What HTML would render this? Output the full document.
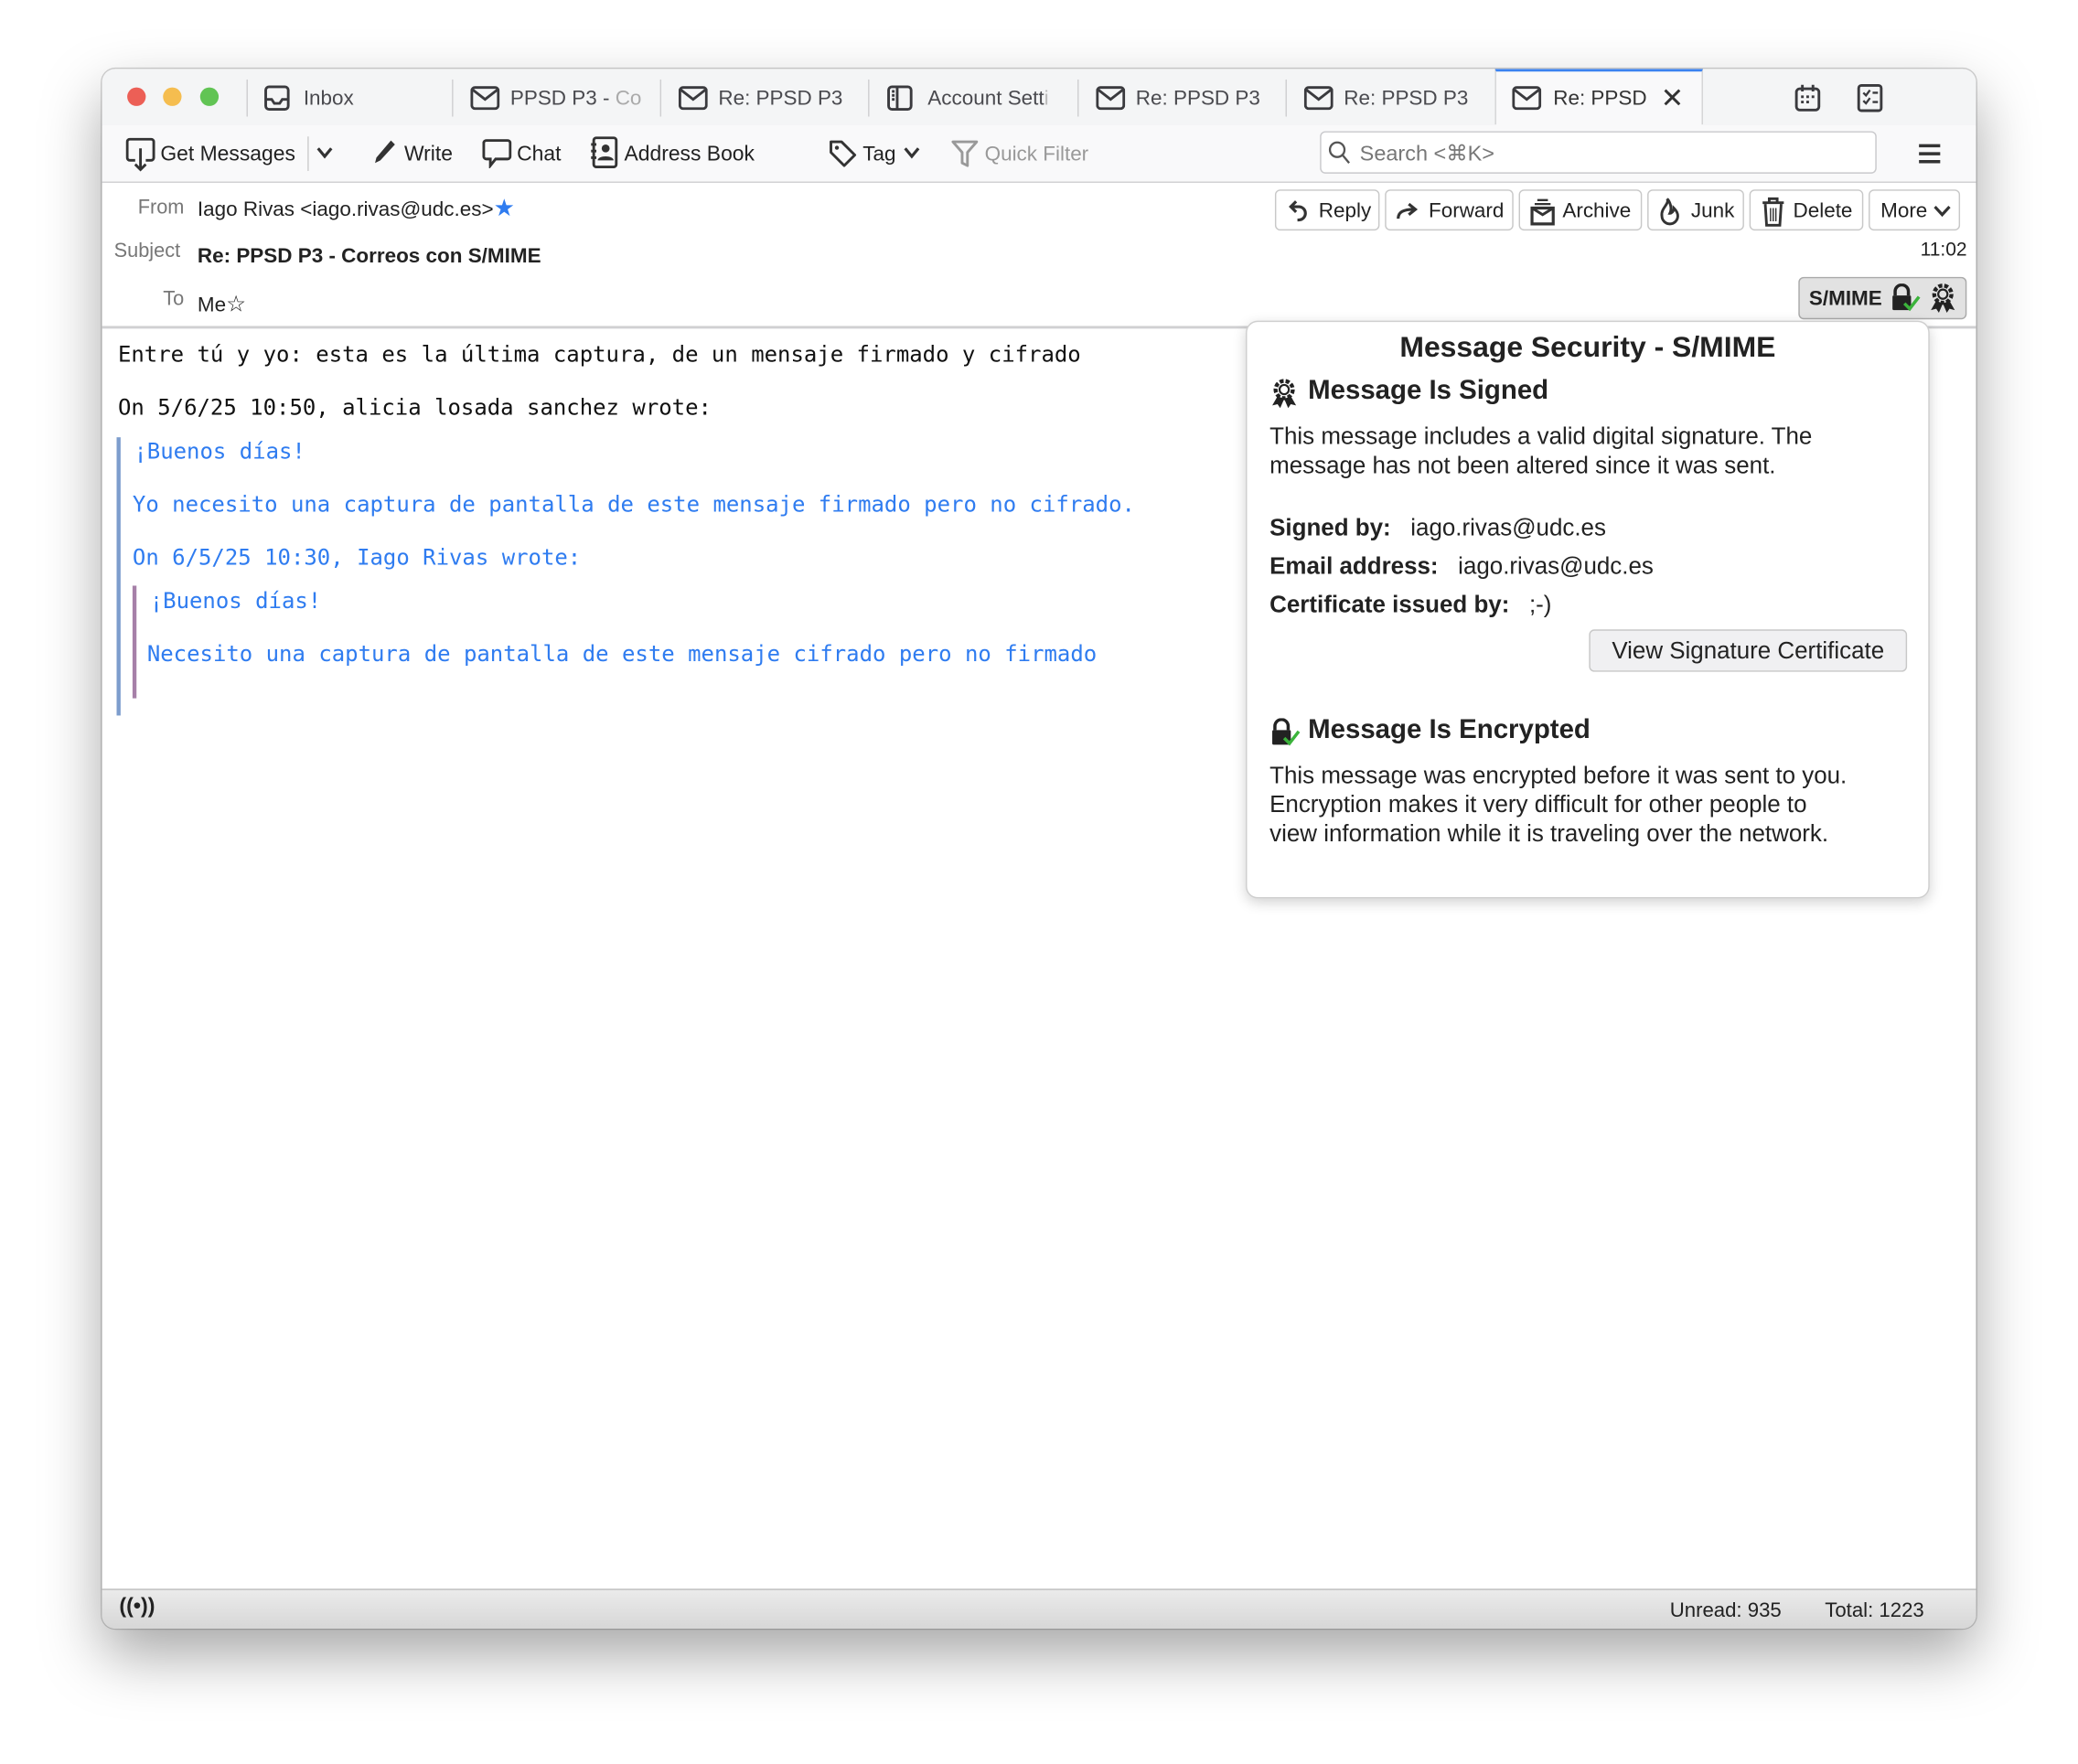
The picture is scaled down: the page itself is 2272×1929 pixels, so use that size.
<!DOCTYPE html>
<html><head><meta charset="utf-8"><style>
html,body{margin:0;padding:0;background:#fff;}
body{width:2272px;height:1928px;overflow:hidden;position:relative;}
#s{position:absolute;left:0;top:0;width:1568px;height:1331px;transform:scale(1.449);transform-origin:0 0;font-family:"Liberation Sans",sans-serif;color:#1f1f1f;}
.win{position:absolute;left:77px;top:52px;width:1414px;height:1177px;border-radius:10px;background:#fff;box-shadow:0 20px 45px rgba(0,0,0,.35),0 0 0 1px rgba(0,0,0,.18);overflow:hidden;}
.abs{position:absolute;}
.tabbar{left:0;top:0;width:1414px;height:42px;background:#f4f5f6;border-bottom:1px solid #d4d4d6;}
.dot{position:absolute;top:14px;width:14px;height:14px;border-radius:50%;}
.sep{position:absolute;top:8px;width:1px;height:28px;background:#cfcfd1;}
.tab{position:absolute;top:14px;font-size:15.5px;color:#4a4a4f;white-space:nowrap;overflow:hidden;}
.toolbar{left:0;top:42px;width:1414px;height:43px;background:#f9f9fa;border-bottom:2px solid #d0d0d2;}
.tb{position:absolute;top:14px;font-size:15.5px;color:#222;white-space:nowrap;}
.hdr{left:0;top:86px;width:1414px;height:108px;background:#fff;border-bottom:2px solid #d0d0d2;}
.lbl{position:absolute;font-size:15px;color:#777;}
.btn{position:absolute;top:5px;height:31px;border:1px solid #c8c8c8;border-radius:4px;background:#fff;font-size:15.5px;line-height:31px;color:#222;box-sizing:border-box;white-space:nowrap;}
.mono{font-family:"DejaVu Sans Mono","Liberation Mono",monospace;font-size:16.55px;white-space:pre;position:absolute;}
.blue{color:#2f7cf0;}
.pop{position:absolute;left:863px;top:190px;width:514px;height:434px;background:#fff;border:1px solid #cfcfcf;border-radius:9px;box-shadow:0 3px 10px rgba(0,0,0,.18);}
.pt{position:absolute;font-size:17.9px;color:#222;white-space:nowrap;}
.status{left:0;top:1147px;width:1414px;height:30px;background:linear-gradient(#ebebeb,#d6d6d6);border-top:1px solid #bdbdbd;}
svg{position:absolute;}
</style></head><body><div id="s">
<div class="win">
 <div class="abs tabbar">
  <div class="dot" style="left:19px;background:#ec5f56"></div>
  <div class="dot" style="left:46px;background:#f5bd4f"></div>
  <div class="dot" style="left:74px;background:#61c454"></div>
  <div class="sep" style="left:109px"></div><div class="sep" style="left:264px"></div><div class="sep" style="left:421px"></div><div class="sep" style="left:578px"></div><div class="sep" style="left:736px"></div><div class="sep" style="left:893px"></div>
  <svg style="left:122px;top:12px" width="20" height="20" viewBox="0 0 20 20"><rect x="1.5" y="1.5" width="17" height="17" rx="2.5" fill="none" stroke="#3a3a3e" stroke-width="2"/><path d="M2 11h4l2 3h4l2-3h4" fill="none" stroke="#3a3a3e" stroke-width="2"/></svg>
  <div class="tab" style="left:152px">Inbox</div>
  <svg style="left:278px;top:13px" width="22" height="18" viewBox="0 0 22 18"><rect x="1" y="1" width="20" height="16" rx="2.5" fill="none" stroke="#3a3a3e" stroke-width="2"/><path d="M2 3l9 7 9-7" fill="none" stroke="#3a3a3e" stroke-width="2"/></svg>
  <div class="tab" style="left:308px;width:100px;color:#4a4a4f">PPSD P3 - <span style="color:#aaa">Co</span></div>
  <svg style="left:435px;top:13px" width="22" height="18" viewBox="0 0 22 18"><rect x="1" y="1" width="20" height="16" rx="2.5" fill="none" stroke="#3a3a3e" stroke-width="2"/><path d="M2 3l9 7 9-7" fill="none" stroke="#3a3a3e" stroke-width="2"/></svg>
  <div class="tab" style="left:465px;width:96px">Re: PPSD P3 <span style="color:#bbb">-</span></div>
  <svg style="left:592px;top:12px" width="20" height="20" viewBox="0 0 20 20"><rect x="1.5" y="1.5" width="17" height="17" rx="2.5" fill="none" stroke="#3a3a3e" stroke-width="2"/><path d="M8 2v16M4 5h2M4 8h2M4 11h2" stroke="#3a3a3e" stroke-width="2"/></svg>
  <div class="tab" style="left:623px;width:98px">Account Sett<span style="color:#bbb">i</span></div>
  <svg style="left:750px;top:13px" width="22" height="18" viewBox="0 0 22 18"><rect x="1" y="1" width="20" height="16" rx="2.5" fill="none" stroke="#3a3a3e" stroke-width="2"/><path d="M2 3l9 7 9-7" fill="none" stroke="#3a3a3e" stroke-width="2"/></svg>
  <div class="tab" style="left:780px;width:96px">Re: PPSD P3 <span style="color:#bbb">-</span></div>
  <svg style="left:907px;top:13px" width="22" height="18" viewBox="0 0 22 18"><rect x="1" y="1" width="20" height="16" rx="2.5" fill="none" stroke="#3a3a3e" stroke-width="2"/><path d="M2 3l9 7 9-7" fill="none" stroke="#3a3a3e" stroke-width="2"/></svg>
  <div class="tab" style="left:937px;width:96px">Re: PPSD P3 <span style="color:#bbb">-</span></div>
  <div class="abs" style="left:1051px;top:0;width:157px;height:43px;background:#f9f9fa;border-left:1px solid #d4d4d6;border-right:1px solid #d4d4d6;border-top:2px solid #3b82f0;box-sizing:border-box"></div>
  <svg style="left:1064px;top:13px" width="22" height="18" viewBox="0 0 22 18"><rect x="1" y="1" width="20" height="16" rx="2.5" fill="none" stroke="#3a3a3e" stroke-width="2"/><path d="M2 3l9 7 9-7" fill="none" stroke="#3a3a3e" stroke-width="2"/></svg>
  <div class="tab" style="left:1095px;color:#333">Re: PPSD</div>
  <div class="tab" style="left:1176px;top:10px;font-size:21px;color:#333">✕</div>
  <svg style="left:1277px;top:11px" width="20" height="22" viewBox="0 0 20 22"><rect x="1.5" y="4" width="17" height="16" rx="2.5" fill="none" stroke="#3a3a3e" stroke-width="2"/><path d="M6 1v5M14 1v5M5 10h2M9 10h2M13 10h2M5 14h2M9 14h2" stroke="#3a3a3e" stroke-width="2"/></svg>
  <svg style="left:1324px;top:11px" width="20" height="22" viewBox="0 0 20 22"><rect x="1.5" y="1.5" width="17" height="19" rx="2" fill="none" stroke="#3a3a3e" stroke-width="2"/><path d="M5 7l2 2 3-4M12 7h4M5 13l2 2 3-4M12 14h4" fill="none" stroke="#3a3a3e" stroke-width="1.6"/></svg>
 </div>
 <div class="abs toolbar">
  <svg style="left:18px;top:10px" width="22" height="26" viewBox="0 0 22 26"><path d="M7 17H3a2 2 0 0 1-2-2V3a2 2 0 0 1 2-2h16a2 2 0 0 1 2 2v12a2 2 0 0 1-2 2h-4" fill="none" stroke="#333" stroke-width="2"/><path d="M11 8v16M7 20l4 4 4-4" fill="none" stroke="#333" stroke-width="2"/></svg>
  <div class="tb" style="left:44px;font-size:15.8px">Get Messages</div>
  <div class="abs" style="left:155px;top:9px;width:1px;height:26px;background:#ccc"></div>
  <svg style="left:162px;top:17px" width="12" height="9" viewBox="0 0 12 9"><path d="M1 1l5 6 5-6" fill="none" stroke="#333" stroke-width="2.2"/></svg>
  <svg style="left:203px;top:10px" width="20" height="22" viewBox="0 0 20 22"><path d="M15 2l3 3-11 12-4 2 1-4z" fill="#333"/></svg>
  <div class="tb" style="left:228px;font-size:15.8px">Write</div>
  <svg style="left:287px;top:11px" width="22" height="22" viewBox="0 0 22 22"><path d="M3 1h16a2 2 0 0 1 2 2v10a2 2 0 0 1-2 2H10l-4 5v-5H3a2 2 0 0 1-2-2V3a2 2 0 0 1 2-2z" fill="none" stroke="#333" stroke-width="2"/></svg>
  <div class="tb" style="left:313px;font-size:15.8px">Chat</div>
  <svg style="left:368px;top:9px" width="22" height="24" viewBox="0 0 22 24"><rect x="3" y="1" width="17" height="22" rx="2" fill="none" stroke="#333" stroke-width="2"/><circle cx="12" cy="9" r="3" fill="#333"/><path d="M6 18c0-4 12-4 12 0z" fill="#333"/><path d="M1 6h4M1 11h4M1 16h4" stroke="#333" stroke-width="2"/></svg>
  <div class="tb" style="left:394px;font-size:15.8px">Address Book</div>
  <svg style="left:548px;top:11px" width="22" height="22" viewBox="0 0 22 22"><path d="M2 2h8l10 10-8 8L2 10z" fill="none" stroke="#333" stroke-width="2" stroke-linejoin="round"/><circle cx="6.5" cy="6.5" r="1.5" fill="#333"/></svg>
  <div class="tb" style="left:574px">Tag</div>
  <svg style="left:605px;top:17px" width="12" height="9" viewBox="0 0 12 9"><path d="M1 1l5 6 5-6" fill="none" stroke="#333" stroke-width="2.2"/></svg>
  <svg style="left:641px;top:11px" width="20" height="22" viewBox="0 0 20 22"><path d="M1 2h18l-7 8v10l-4-2v-8z" fill="none" stroke="#999" stroke-width="2" stroke-linejoin="round"/></svg>
  <div class="tb" style="left:666px;color:#999">Quick Filter</div>
  <div class="abs" style="left:919px;top:5px;width:420px;height:32px;background:#fff;border:1px solid #c9c9cc;border-radius:4px;box-sizing:border-box"></div>
  <svg style="left:925px;top:12px" width="18" height="20" viewBox="0 0 18 20"><circle cx="7" cy="7" r="5.5" fill="none" stroke="#555" stroke-width="1.6"/><path d="M11 11l5 6" stroke="#555" stroke-width="1.6"/></svg>
  <div class="tb" style="left:949px;top:12px;color:#777;font-size:16.2px">Search &lt;⌘K&gt;</div>
  <svg style="left:1370px;top:14px" width="18" height="16" viewBox="0 0 18 16"><path d="M1 2h16M1 8h16M1 14h16" stroke="#333" stroke-width="2.4"/></svg>
 </div>
 <div class="abs hdr">
  <div class="lbl" style="left:27px;top:10px">From</div>
  <div class="abs" style="left:72px;top:9px;font-size:15.5px;color:#222">Iago Rivas &lt;iago.rivas@udc.es&gt;<span style="color:#2f7cf0;font-size:18px">★</span></div>
  <div class="lbl" style="left:9px;top:43px">Subject</div>
  <div class="abs" style="left:72px;top:47px;font-size:15.5px;font-weight:bold;color:#222">Re: PPSD P3 - Correos con S/MIME</div>
  <div class="lbl" style="left:46px;top:79px">To</div>
  <div class="abs" style="left:72px;top:82px;font-size:15.5px;color:#222">Me<span style="font-size:17px">☆</span></div>
  <div class="btn" style="left:885px;width:79px;padding-left:32px">Reply</div>
  <svg style="left:895px;top:12px" width="16" height="20" viewBox="0 0 16 20"><path d="M6 2L2 6l4 4M2 6h6a5 5 0 0 1 0 10h-1" fill="none" stroke="#333" stroke-width="2.2"/></svg>
  <div class="btn" style="left:968px;width:97px;padding-left:32px">Forward</div>
  <svg style="left:976px;top:15px" width="18" height="14" viewBox="0 0 18 14"><path d="M2 12c0-5 4-7 12-7M10 1l5 4-5 4" fill="none" stroke="#333" stroke-width="2.2"/></svg>
  <div class="btn" style="left:1069px;width:93px;padding-left:32px">Archive</div>
  <svg style="left:1077px;top:11px" width="20" height="22" viewBox="0 0 20 22"><path d="M6 2h8M4 5h12" stroke="#333" stroke-width="1.6"/><path d="M2 8h16v12H2z" fill="none" stroke="#333" stroke-width="2.2"/><path d="M2 8l8 5 8-5" fill="none" stroke="#333" stroke-width="2"/></svg>
  <div class="btn" style="left:1166px;width:73px;padding-left:32px">Junk</div>
  <svg style="left:1175px;top:11px" width="16" height="22" viewBox="0 0 16 22"><path d="M6 1c2 4-5 7-4 13a6 6 0 0 0 12 0c0-3-2-5-3-6 0 3-2 4-3 4 2-4 0-9-2-11z" fill="none" stroke="#333" stroke-width="2"/></svg>
  <div class="btn" style="left:1243px;width:86px;padding-left:32px">Delete</div>
  <svg style="left:1252px;top:10px" width="18" height="24" viewBox="0 0 18 24"><path d="M1 5h16M6 5V2h6v3" fill="none" stroke="#333" stroke-width="2"/><path d="M3 6l1 16h10l1-16" fill="none" stroke="#333" stroke-width="2"/><path d="M7 9v10M9 9v10M11 9v10" stroke="#333" stroke-width="1"/></svg>
  <div class="btn" style="left:1333px;width:69px;padding-left:8px">More</div>
  <svg style="left:1382px;top:17px" width="13" height="9" viewBox="0 0 13 9"><path d="M1 1l5.5 6 5.5-6" fill="none" stroke="#333" stroke-width="2.2"/></svg>
  <div class="abs" style="left:1372px;top:43px;font-size:14.5px;color:#222">11:02</div>
  <div class="abs" style="left:1280px;top:71px;width:127px;height:32px;background:#e2e2e2;border:1px solid #aaa;border-radius:4px;box-sizing:border-box;font-size:15.5px;font-weight:bold;color:#222;line-height:32px;padding-left:7px">S/MIME</div>
  <svg style="left:1349px;top:76px" width="24" height="22" viewBox="0 0 24 22"><path d="M4 9V6a5 5 0 0 1 10 0v3" fill="none" stroke="#222" stroke-width="2.4"/><rect x="2" y="9" width="14" height="11" rx="1" fill="#222"/><path d="M11 15l4 4 7-9" fill="none" stroke="#3bb33b" stroke-width="2.4"/></svg>
  <svg style="left:1378px;top:75px" width="22" height="24" viewBox="0 0 22 24"><circle cx="11" cy="9" r="6.5" fill="none" stroke="#222" stroke-width="3" stroke-dasharray="3 1.5"/><circle cx="11" cy="9" r="3.5" fill="none" stroke="#222" stroke-width="1.5"/><path d="M6 14l-4 7 4-1 2 3 3-7M16 14l4 7-4-1-2 3-3-7" fill="#222"/></svg>
 </div>
 <div class="mono" style="left:12px;top:206px;color:#111">Entre tú y yo: esta es la última captura, de un mensaje firmado y cifrado</div>
 <div class="mono" style="left:12px;top:246px;color:#111">On 5/6/25 10:50, alicia losada sanchez wrote:</div>
 <div class="abs" style="left:11px;top:278px;width:3px;height:210px;background:#7d9dcd"></div>
 <div class="mono blue" style="left:24px;top:279px">¡Buenos días!</div>
 <div class="mono blue" style="left:23px;top:319px">Yo necesito una captura de pantalla de este mensaje firmado pero no cifrado.</div>
 <div class="mono blue" style="left:23px;top:359px">On 6/5/25 10:30, Iago Rivas wrote:</div>
 <div class="abs" style="left:23px;top:390px;width:3px;height:85px;background:#a680a8"></div>
 <div class="mono blue" style="left:36px;top:392px">¡Buenos días!</div>
 <div class="mono blue" style="left:34px;top:432px">Necesito una captura de pantalla de este mensaje cifrado pero no firmado</div>

 <div class="pop">
  <div class="pt" style="left:0;width:514px;text-align:center;top:6px;font-size:22px;font-weight:bold">Message Security - S/MIME</div>
  <svg style="left:17px;top:42px" width="22" height="24" viewBox="0 0 22 24"><circle cx="11" cy="9" r="6.5" fill="none" stroke="#222" stroke-width="3" stroke-dasharray="3 1.5"/><circle cx="11" cy="9" r="3.5" fill="none" stroke="#222" stroke-width="1.5"/><path d="M6 14l-4 7 4-1 2 3 3-7M16 14l4 7-4-1-2 3-3-7" fill="#222"/></svg>
  <div class="pt" style="left:46px;top:41px;font-size:20.3px;font-weight:bold">Message Is Signed</div>
  <div class="pt" style="left:17px;top:75px;line-height:22px">This message includes a valid digital signature. The<br>message has not been altered since it was sent.</div>
  <div class="pt" style="left:17px;top:145px"><b>Signed by:</b>&nbsp;&nbsp; iago.rivas@udc.es</div>
  <div class="pt" style="left:17px;top:174px"><b>Email address:</b>&nbsp;&nbsp; iago.rivas@udc.es</div>
  <div class="pt" style="left:17px;top:203px"><b>Certificate issued by:</b>&nbsp;&nbsp; ;-)</div>
  <div class="abs" style="left:258px;top:232px;width:240px;height:32px;background:#f0f0f2;border:1px solid #c8c8c8;border-radius:4px;box-sizing:border-box;font-size:17.9px;line-height:30px;text-align:center;color:#222">View Signature Certificate</div>
  <svg style="left:17px;top:299px" width="24" height="22" viewBox="0 0 24 22"><path d="M4 9V6a5 5 0 0 1 10 0v3" fill="none" stroke="#222" stroke-width="2.4"/><rect x="2" y="9" width="14" height="11" rx="1" fill="#222"/><path d="M11 15l4 4 7-9" fill="none" stroke="#3bb33b" stroke-width="2.4"/></svg>
  <div class="pt" style="left:46px;top:297px;font-size:20.3px;font-weight:bold">Message Is Encrypted</div>
  <div class="pt" style="left:17px;top:331px;line-height:22px">This message was encrypted before it was sent to you.<br>Encryption makes it very difficult for other people to<br>view information while it is traveling over the network.</div>
 </div>

 <div class="abs status">
  <div class="abs" style="left:13px;top:4px;font-size:16px;font-weight:bold;color:#222">((•))</div>
  <div class="abs" style="left:1183px;top:7px;font-size:15.3px;color:#222">Unread: 935</div>
  <div class="abs" style="left:1300px;top:7px;font-size:15.3px;color:#222">Total: 1223</div>
 </div>
</div>
</div></body></html>
